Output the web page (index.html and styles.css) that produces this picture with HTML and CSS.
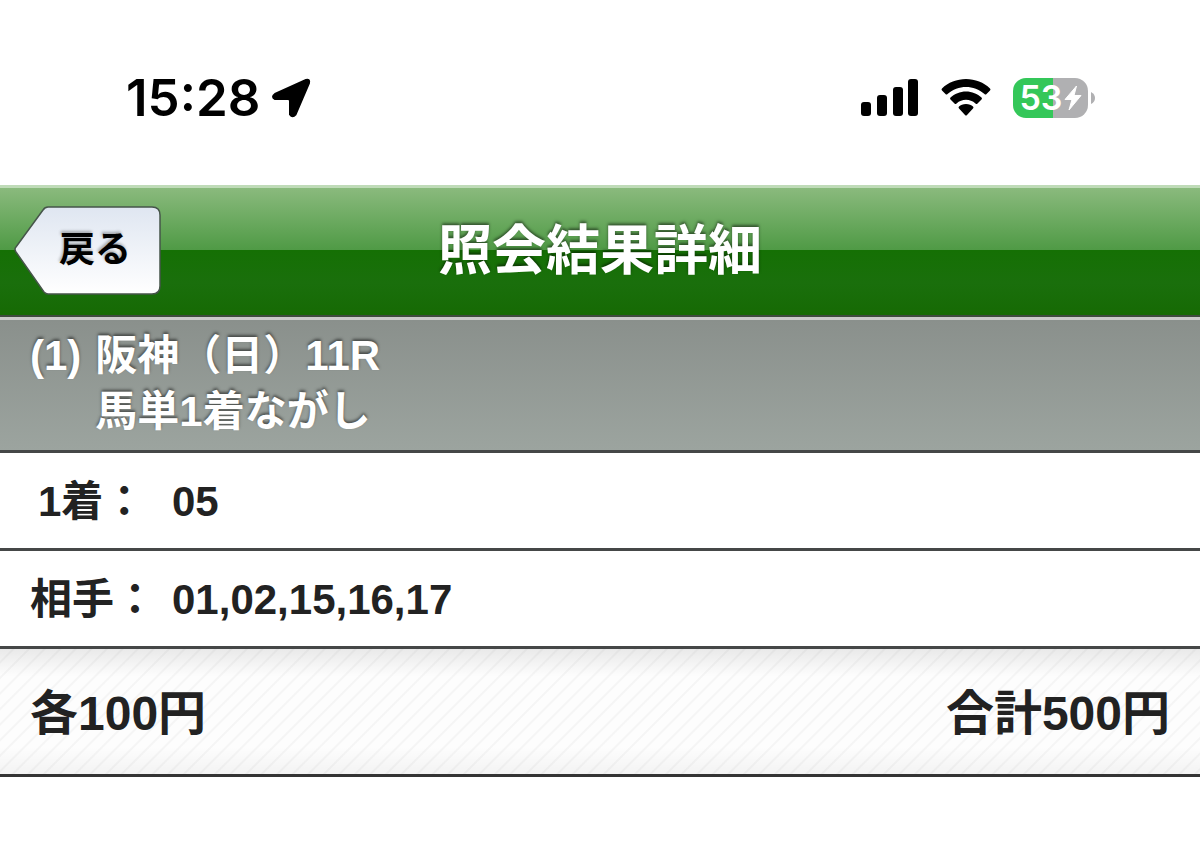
FILE: index.html
```
<!DOCTYPE html>
<html lang="ja">
<head>
    <meta charset="UTF-8">
    <meta name="viewport" content="width=device-width, initial-scale=1.0">
    <title>照会結果詳細</title>
    <link rel="stylesheet" href="styles.css">
</head>
<body>
    <div class="status-bar">
        <div class="status-time">
            <span>15:28</span>
            <svg width="40" height="40" viewBox="0 0 40 40" aria-hidden="true">
                <path d="M3 16 34 2Q38 1 37 5L23.500 36.500Q20.500 40 18 36.500V23Q18 21 16 21H3Q-1 19 3 16Z" stroke="#000" stroke-width="2" stroke-linejoin="round"/>
            </svg>
        </div>
        <div class="status-icons">
            <svg width="58" height="38" viewBox="0 0 58 38" aria-hidden="true">
                <rect x="0" y="23" width="10" height="14" rx="3"/>
                <rect x="16" y="16" width="10" height="21" rx="3"/>
                <rect x="32" y="8" width="10" height="29" rx="3"/>
                <rect x="47" y="0" width="10" height="37" rx="3"/>
            </svg>
            <svg class="wifi" width="50" height="38" viewBox="0 0 50 38" aria-hidden="true">
                <path d="M25 0C16 0 7 3.500 1 9.500Q0 10.500 1 11.500L4.500 15Q5.500 16 6.500 15C17 5.500 33 5.500 43.500 15Q44.500 16 45.500 15L49 11.500Q50 10.500 49 9.500C43 3.500 34 0 25 0Z"/>
                <path d="M25 12.500C19 12.500 13.500 15 9.500 18.500Q8.500 19.500 9.500 20.500L13.500 24.500Q14.500 25.500 15.500 24.500C21 19.500 29 19.500 34.500 24.500Q35.500 25.500 36.500 24.500L40.500 20.500Q41.500 19.500 40.500 18.500C36.500 15 31 12.500 25 12.500Z"/>
                <path d="M25 25C22 25 19.500 26 18 27.500Q17 28.500 18 29.500L24 36Q25 37 26 36L32 29.500Q33 28.500 32 27.500C30.500 26 28 25 25 25Z"/>
            </svg>
            <div class="battery">
                <div class="battery-body">
                    <span>53</span>
                    <svg width="18" height="28" viewBox="0 0 18 28" aria-hidden="true">
                        <path d="M12.500 2 1 15.500H8L5 26 17 11.500H10Z" fill="#fff" stroke="#fff" stroke-linejoin="round"/>
                    </svg>
                </div>
                <svg width="4" height="12" viewBox="0 0 4 12" aria-hidden="true">
                    <path d="M0 0Q4 2 4 6T0 12Z" fill="#b0b0b2"/>
                </svg>
            </div>
        </div>
    </div>

    <header class="header">
        <button type="button" class="back">
            <svg class="back-shape" width="148" height="90" viewBox="0 0 148 90" aria-hidden="true">
                <defs>
                    <linearGradient id="backFill" x1="0" y1="0" x2="0" y2="1">
                        <stop offset="0" stop-color="#dfe6f1"/>
                        <stop offset="1" stop-color="#ffffff"/>
                    </linearGradient>
                </defs>
                <path d="M34 1H138Q146 1 146 9V80Q146 88 138 88H34Q32 88 30 86L2 46Q0 43 2 41L29 4Q31 1 34 1Z" fill="url(#backFill)" stroke="#46554a" stroke-width="1.500"/>
            </svg>
            <span>戻る</span>
        </button>
        <h1>照会結果詳細</h1>
    </header>

    <main>
        <h2 class="race">
            <span class="race-no">(1)</span>
            <span>阪神（日）11R<br>馬単1着ながし</span>
        </h2>
        <dl class="bets">
            <div class="bet">
                <dt class="first">1着：</dt>
                <dd>05</dd>
            </div>
            <div class="bet">
                <dt>相手：</dt>
                <dd>01,02,15,16,17</dd>
            </div>
        </dl>
        <div class="total">
            <span>各100円</span>
            <span>合計500円</span>
        </div>
    </main>
</body>
</html>
```
FILE: styles.css
```
* {
    box-sizing: border-box;
}
body {
    background-color: #ffffff;
    color: #222222;
    font-family: "Liberation Sans", "Noto Sans CJK JP", sans-serif;
    font-weight: bold;
    margin: 0;
}
svg {
    display: block;
    flex: none;
}

/* status bar */
.status-bar {
    display: flex;
    align-items: center;
    justify-content: space-between;
    height: 185px;
    padding: 10px 105px 0 126px;
    color: #000000;
    font-family: Inter, sans-serif;
    font-weight: 600;
}
.status-time {
    display: flex;
    align-items: center;
    gap: 12px;
    font-size: 51px;
    line-height: 60px;
}
.status-icons {
    display: flex;
    align-items: center;
}
.wifi {
    margin: 0 22px;
}
.battery {
    display: flex;
    align-items: center;
    gap: 3px;
}
.battery-body {
    display: flex;
    align-items: center;
    justify-content: center;
    gap: 1px;
    width: 75px;
    height: 40px;
    border-radius: 13px;
    background: linear-gradient(90deg, #34c759 53%, #b0b0b2 53%);
    color: #ffffff;
    font-size: 34px;
    line-height: 40px;
}

/* title bar */
.header {
    display: grid;
    grid-template-columns: 1fr auto 1fr;
    align-items: center;
    height: 132px;
    padding: 0 14px 2px;
    border-top: 3px solid #bfdbb8;
    border-bottom: 2px solid #3f4a3f;
    background: linear-gradient(#8aba7d 0%, #4f9a45 49%, #157004 49%, #1a6f0c 75%, #166a04 100%);
}
.header h1 {
    margin: 0;
    color: #ffffff;
    font-size: 54px;
    line-height: 64px;
    text-shadow: 0 -2px 3px rgba(0, 0, 0, 0.5);
}
.back {
    position: relative;
    justify-self: start;
    width: 148px;
    height: 90px;
    padding: 0 0 2px 14px;
    border: 0;
    background: none;
    color: #000000;
    font-family: inherit;
    font-size: 36px;
    font-weight: bold;
    line-height: 44px;
    text-shadow: -1px -2px 3px rgba(0, 0, 0, 0.3);
}
.back-shape {
    position: absolute;
    top: 0;
    left: 0;
}
.back span {
    position: relative;
}

/* race heading */
.race {
    display: flex;
    gap: 14px;
    margin: 0;
    padding: 8px 30px 10px;
    border-top: 3px solid #cacaca;
    border-bottom: 3px solid #454747;
    background: linear-gradient(#8a908c, #9ca49f);
    color: #ffffff;
    font-size: 42px;
    line-height: 56px;
    text-shadow: 0 -2px 3px rgba(0, 0, 0, 0.5);
}

/* bet rows */
.bets {
    margin: 0;
    font-size: 42px;
    line-height: 60px;
}
.bet {
    display: flex;
    padding: 19px 30px 16px;
    border-bottom: 3px solid #454747;
}
.bet dt {
    width: 142px;
    white-space: nowrap;
}
.bet .first {
    padding-left: 8px;
}
.bet dd {
    margin: 0;
}
.total {
    display: flex;
    justify-content: space-between;
    padding: 32px 30px 28px;
    border-bottom: 3px solid #343434;
    background:
        linear-gradient(rgba(0, 0, 0, 0.08), transparent 22%, transparent 78%, rgba(0, 0, 0, 0.04)),
        repeating-linear-gradient(135deg, #fdfdfd 0 8px, #f5f5f5 9px 10px, #fdfdfd 11px);
    font-size: 48px;
    line-height: 65px;
}
```
